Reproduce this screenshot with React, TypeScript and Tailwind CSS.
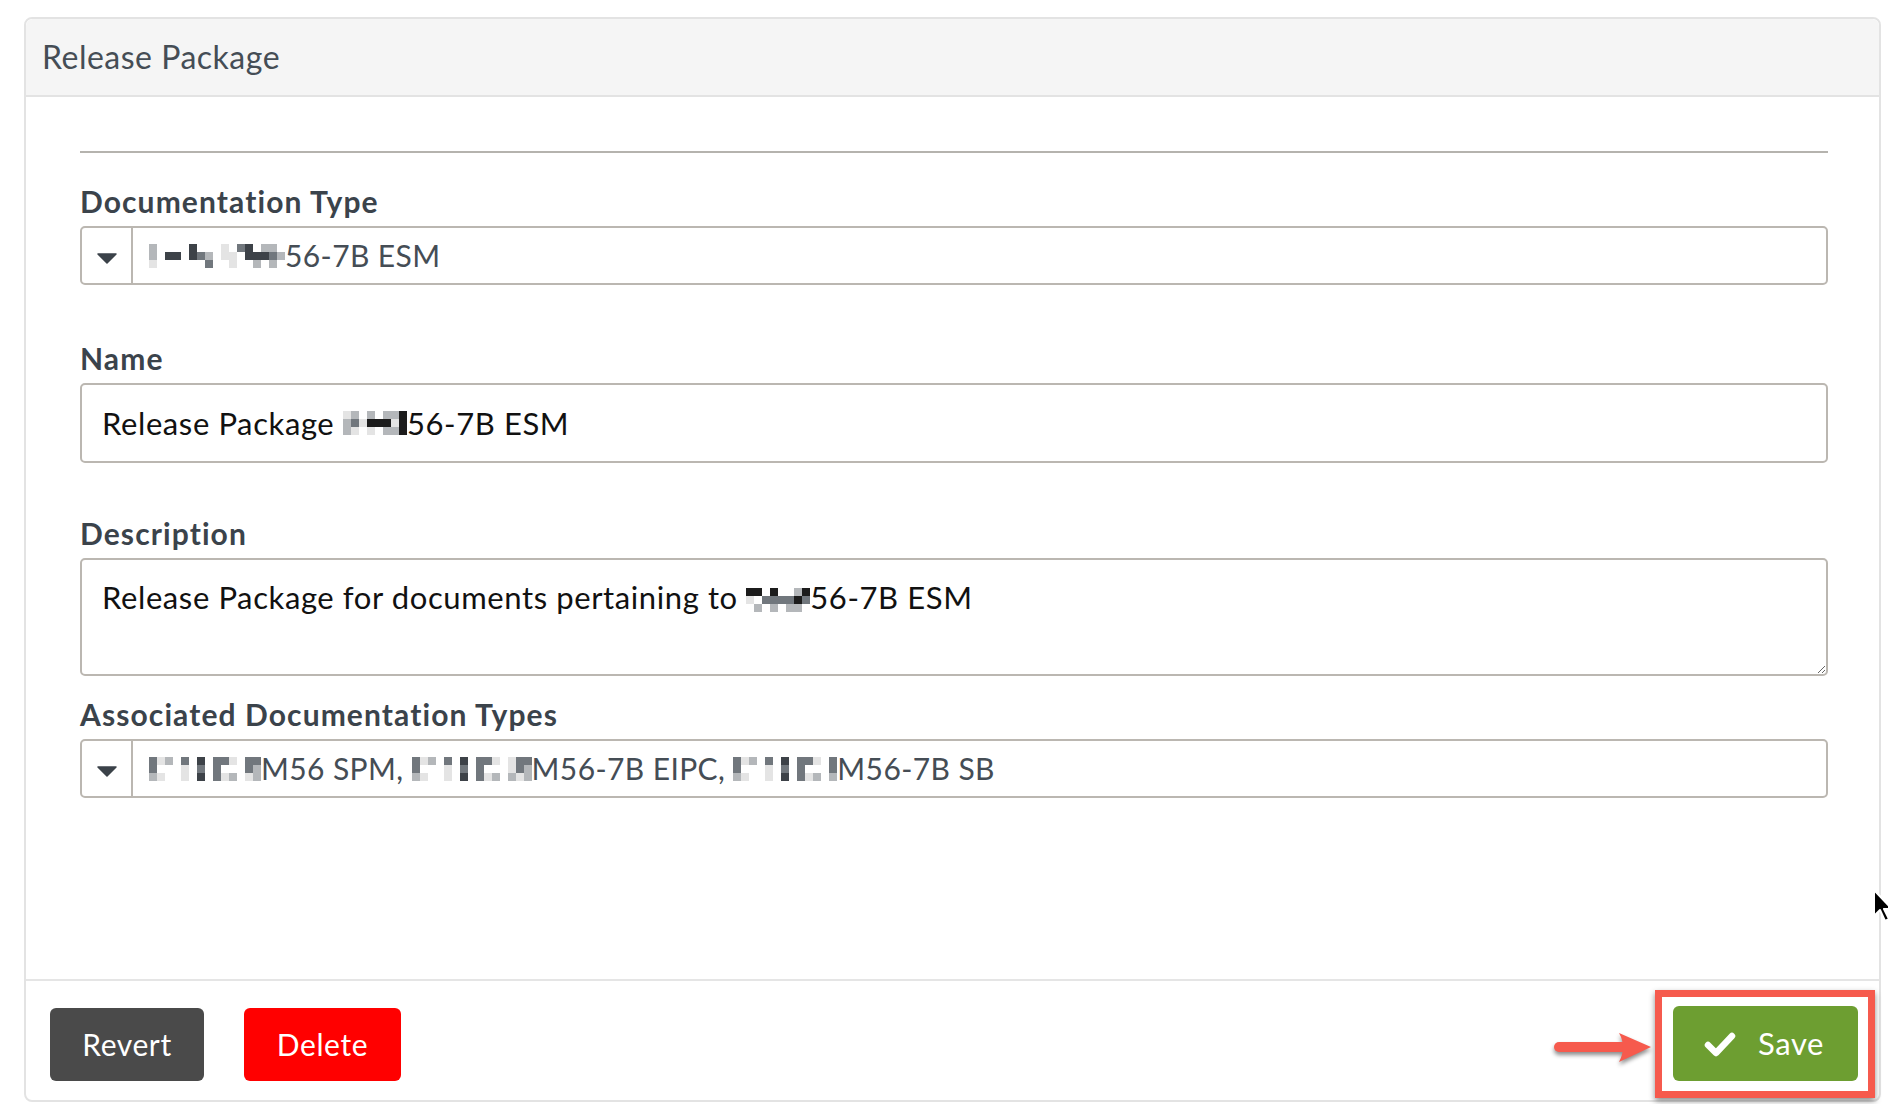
import React from "react";

// grey levels used by the pixelated (redacted) bits of text
const shade: Record<string, string> = {
  a: "bg-[#e4e4e4]",
  b: "bg-[#b4b7ba]",
  c: "bg-[#71777d]",
  d: "bg-[#3d4248]",
  e: "bg-[#1c1c1c]",
};

function Mosaic({ rows }: { rows: string[] }) {
  return (
    <span className="inline-block align-[-3px]">
      {rows.map((row, r) => (
        <span key={r} className="flex">
          {row.split("").map((ch, i) => (
            <span key={i} className={`block w-[8px] h-[8px] ${shade[ch] ?? ""}`} />
          ))}
        </span>
      ))}
    </span>
  );
}

function Caret() {
  return (
    <div className="w-[51px] shrink-0 flex items-center justify-center border-r-2 border-[#bbb7b1] pt-[6px]">
      <svg width="20" height="11" viewBox="0 0 20 11">
        <path d="M1 1 H19 L10 10 Z" fill="#3b4249" stroke="#3b4249" strokeWidth="1.5" strokeLinejoin="round" />
      </svg>
    </div>
  );
}

function Label({ children }: { children: React.ReactNode }) {
  return (
    <div className="text-[30px] leading-[34px] font-bold tracking-[1.1px] text-[#3b434b] mb-[8px]">{children}</div>
  );
}

export default function App() {
  return (
    <div className="relative h-[1104px] overflow-hidden bg-white pt-[17px] pl-[24px] pr-[7px] font-['Lato',sans-serif]">
      <div className="flex flex-col rounded-[8px] border-2 border-[#e3e3e3] bg-white">
        {/* header */}
        <div className="h-[78px] flex items-center pl-[16px] bg-[#f5f5f5] border-b-2 border-[#e3e3e3] rounded-t-[7px]">
          <span className="text-[32px] tracking-[0.5px] text-[#454d55]">Release Package</span>
        </div>

        {/* form */}
        <div className="pl-[54px] pr-[51px] pt-[54px] pb-[181px]">
          <div className="border-t-2 border-[#b5b3ae] mb-[31px]" />

          <Label>Documentation Type</Label>
          <div className="flex h-[59px] rounded-[5px] border-2 border-[#bbb7b1]">
            <Caret />
            <div className="flex items-center pl-[16px] text-[30px] tracking-[0.4px] text-[#454d55]">
              <Mosaic
                rows={[
                  "b....d...a.cd.bb.",
                  "b.dd.dcb.aa.dddcb",
                  "a......c..a..b.b.",
                ]}
              />
              <span>56-7B ESM</span>
            </div>
          </div>

          <div className="mt-[56px]">
            <Label>Name</Label>
          </div>
          <div className="flex items-center h-[80px] rounded-[5px] border-2 border-[#bbb7b1] pl-[20px] text-[31px] tracking-[0.6px] text-[#111] whitespace-pre">
            <span>Release Package </span>
            <Mosaic rows={["ab.b.bbe", "bcaeeeae", "ba.a.bbe"]} />
            <span>56-7B ESM</span>
          </div>

          <div className="mt-[53px]">
            <Label>Description</Label>
          </div>
          <div className="h-[118px] rounded-[5px] border-2 border-[#bbb7b1] pl-[20px] pt-[19px] text-[31px] leading-[36px] tracking-[0.6px] text-[#111] resize-y overflow-hidden whitespace-pre">
            <span>Release Package for documents pertaining to </span>
            <Mosaic rows={["ee.e..be", "a.ccccec", ".b.b.bb."]} />
            <span>56-7B ESM</span>
          </div>

          <div className="mt-[21px]">
            <Label>Associated Documentation Types</Label>
          </div>
          <div className="flex h-[59px] rounded-[5px] border-2 border-[#bbb7b1]">
            <Caret />
            <div className="flex items-center pl-[16px] text-[30px] tracking-[0.4px] text-[#454d55] whitespace-pre">
              <Mosaic rows={["cab.c.d.cca.cc", "c...a.c.c...cb", "ba..a.d.cab.ab"]} />
              <span>M56 SPM, </span>
              <Mosaic rows={["cab.c.d.cca.acc", "c...a.c.c...acb", "ba..a.d.cab.bab"]} />
              <span>M56-7B EIPC, </span>
              <Mosaic rows={["cab.c.d.cca.c", "c...a.c.c...c", "ba..a.d.cab.b"]} />
              <span>M56-7B SB</span>
            </div>
          </div>
        </div>

        {/* footer */}
        <div className="flex items-center justify-between border-t-2 border-[#e5e5e5] pt-[9px] pb-[2px] pl-[24px] pr-[4px]">
          <div className="flex gap-[40px]">
            <button className="w-[154px] h-[73px] rounded-[6px] bg-[#4a4a4a] text-white text-[30px] tracking-[0.6px]">
              Revert
            </button>
            <button className="w-[157px] h-[73px] rounded-[6px] bg-[#ff0000] text-white text-[30px] tracking-[0.6px]">
              Delete
            </button>
          </div>

          {/* annotation around the save button */}
          <div className="relative border-[7px] border-[#f65a4d] pt-[9px] pb-[10px] pl-[11px] pr-[10px] shadow-[0_3px_6px_rgba(0,0,0,0.45)]">
            <svg
              className="absolute right-[calc(100%+9px)] top-[34px]"
              width="100"
              height="34"
              viewBox="0 0 100 34"
              style={{ filter: "drop-shadow(0 3px 2px rgba(0,0,0,0.45))" }}
            >
              <line x1="6" y1="16" x2="76" y2="16" stroke="#f65a4d" strokeWidth="10" strokeLinecap="round" />
              <path d="M66 2 L98 16 L66 31 Q74 16 66 2 Z" fill="#f65a4d" />
            </svg>
            <button className="flex items-center w-[185px] h-[75px] rounded-[6px] bg-[#6d9e31] text-white text-[31px] tracking-[0.6px] pl-[31px] gap-[22px]">
              <svg width="32" height="26" viewBox="0 0 32 26">
                <path d="M4 14 L12 22 L28 5" fill="none" stroke="white" strokeWidth="6.5" strokeLinecap="round" strokeLinejoin="round" />
              </svg>
              <span>Save</span>
            </button>
          </div>
        </div>
      </div>

      {/* mouse pointer */}
      <svg className="absolute left-[1872px] top-[888px]" width="24" height="36" viewBox="0 0 24 36">
        <path d="M2 2 L2 28 L8 22 L13 33 L17 31 L12 21 L20 21 Z" fill="black" stroke="white" strokeWidth="2" strokeLinejoin="round" />
      </svg>
    </div>
  );
}
